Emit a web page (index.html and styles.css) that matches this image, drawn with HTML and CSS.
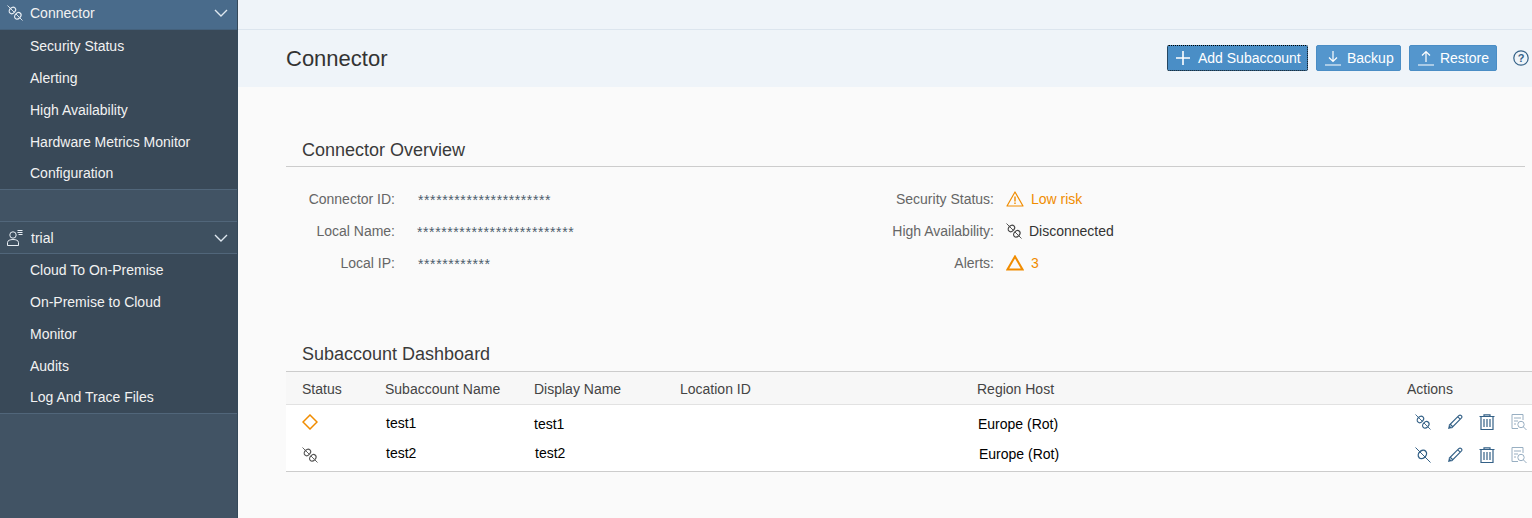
FILE: index.html
```html
<!DOCTYPE html>
<html lang="en">
<head>
    <meta charset="UTF-8">
    <title>Connector</title>
    <link rel="stylesheet" href="styles.css">
</head>
<body>
    <svg class="sprites" width="0" height="0">
        <symbol id="plug" viewBox="0 0 16 16">
            <path d="M.5 .5L3 3M4 4L7 7M9 9L12 12M13 13L15.5 15.5" fill="none" stroke="currentColor" stroke-width=".9"/>
            <ellipse cx="5.4" cy="5.4" rx="3.6" ry="2.7" transform="rotate(-45 5.4 5.4)" fill="none" stroke="currentColor" stroke-width="1.2"/>
            <ellipse cx="10.8" cy="10.8" rx="3.6" ry="2.7" transform="rotate(-45 10.8 10.8)" fill="none" stroke="currentColor" stroke-width="1.2"/>
        </symbol>
        <symbol id="plug-on" viewBox="0 0 16 16">
            <path d="M.5 .5L15.5 15.5" fill="none" stroke="currentColor"/>
            <ellipse cx="7.4" cy="7.4" rx="4.6" ry="3.6" transform="rotate(-45 7.4 7.4)" fill="none" stroke="currentColor" stroke-width="1.4"/>
        </symbol>
        <symbol id="pencil" viewBox="0 0 16 16">
            <path d="M2 11.5L11.8 1.7A1.4 1.4 0 0 1 14.3 4.2L4.5 14 M3.5 10.5L5.5 12.5 M10.8 2.8L13.2 5.2" fill="none" stroke="currentColor" stroke-width="1.1"/>
            <path d="M1 15L2 11L5 14Z" fill="currentColor"/>
        </symbol>
        <symbol id="trash" viewBox="0 0 16 16">
            <path d="M.5 2.5H15.5M5 2.5V.8H11V2.5" fill="none" stroke="currentColor" stroke-width="1.2"/>
            <path d="M2 3V15.5H14V3" fill="none" stroke="currentColor" stroke-width="1.2"/>
            <path d="M5 5V13M8 5V13M11 5V13" fill="none" stroke="currentColor" stroke-width="1.6" opacity=".75"/>
        </symbol>
        <symbol id="log" viewBox="0 0 16 16">
            <path d="M12 6V.5H1V14.5H7M3 4H10M3 7H7M3 10H5" fill="none" stroke="currentColor"/>
            <circle cx="10" cy="10.5" r="3.2" fill="none" stroke="currentColor"/>
            <path d="M12.3 12.8L15.5 16" fill="none" stroke="currentColor"/>
        </symbol>
    </svg>

    <div class="page">
        <nav class="sidebar">
            <div class="nav-head active">
                <svg class="nav-icon"><use href="#plug"/></svg>
                <span class="nav-title">Connector</span>
                <svg class="chevron" viewBox="0 0 14 8"><path d="M1 1L7 7L13 1" fill="none" stroke="currentColor" stroke-width="1.4"/></svg>
            </div>
            <ul class="nav-list">
                <li>Security Status</li>
                <li>Alerting</li>
                <li>High Availability</li>
                <li>Hardware Metrics Monitor</li>
                <li>Configuration</li>
            </ul>
            <div class="nav-gap"></div>
            <div class="nav-head">
                <svg class="nav-icon" viewBox="0 0 16 16"><circle cx="6" cy="5" r="3.2" fill="none" stroke="currentColor"/><path d="M.5 15.5V12.5C.5 10.5 3 9.5 6 9.5S11.5 10.5 11.5 12.5V15.5Z" fill="none" stroke="currentColor"/><path d="M10.5 .5H15.5M10.5 2.5H15.5M11.5 4.5H15.5" fill="none" stroke="currentColor"/></svg>
                <span class="nav-title trial">trial</span>
                <svg class="chevron" viewBox="0 0 14 8"><path d="M1 1L7 7L13 1" fill="none" stroke="currentColor" stroke-width="1.4"/></svg>
            </div>
            <ul class="nav-list">
                <li>Cloud To On-Premise</li>
                <li>On-Premise to Cloud</li>
                <li>Monitor</li>
                <li>Audits</li>
                <li>Log And Trace Files</li>
            </ul>
        </nav>

        <main class="content">
            <div class="topstrip"></div>
            <header class="page-head">
                <h1>Connector</h1>
                <div class="toolbar">
                    <button class="btn focused" type="button">
                        <svg class="btn-icon" viewBox="0 0 16 16"><path d="M8 1V15M1 8H15" fill="none" stroke="currentColor" stroke-width="1.6"/></svg>
                        Add Subaccount
                    </button>
                    <button class="btn backup" type="button">
                        <svg class="btn-icon" viewBox="0 0 16 16"><path d="M8 1V11M4 7.5L8 11.5L12 7.5M0 15H16" fill="none" stroke="currentColor" stroke-width="1.2"/></svg>
                        Backup
                    </button>
                    <button class="btn" type="button">
                        <svg class="btn-icon" viewBox="0 0 16 16"><path d="M8 12V2M4 5.5L8 1.5L12 5.5M0 15H16" fill="none" stroke="currentColor" stroke-width="1.2"/></svg>
                        Restore
                    </button>
                    <svg class="help" viewBox="0 0 16 16"><circle cx="8" cy="8" r="7.2" fill="none" stroke="currentColor" stroke-width="1.2"/><text x="8" y="12" text-anchor="middle">?</text></svg>
                </div>
            </header>

            <section class="overview">
                <h2>Connector Overview</h2>
                <div class="facts">
                    <dl class="fact-col left">
                        <dt>Connector ID:</dt><dd class="mask">**********************</dd>
                        <dt>Local Name:</dt><dd class="mask wide">**************************</dd>
                        <dt>Local IP:</dt><dd class="mask">************</dd>
                    </dl>
                    <dl class="fact-col right">
                        <dt>Security Status:</dt>
                        <dd class="warn"><svg class="fact-icon" viewBox="0 0 18 16"><path d="M9 1L17 15H1Z" fill="none" stroke="currentColor" stroke-width="1.2" stroke-linejoin="round"/><path d="M9 5.5V10.5M9 11.5V13" fill="none" stroke="currentColor" stroke-width="1.4"/></svg>Low risk</dd>
                        <dt>High Availability:</dt>
                        <dd><svg class="fact-icon plug-small"><use href="#plug"/></svg>Disconnected</dd>
                        <dt>Alerts:</dt>
                        <dd class="warn"><svg class="fact-icon" viewBox="0 0 18 16"><path d="M9 1.5L16.5 14.5H1.5Z" fill="none" stroke="currentColor" stroke-width="2"/></svg>3</dd>
                    </dl>
                </div>
            </section>

            <section class="dashboard">
                <h2>Subaccount Dashboard</h2>
                <table class="accounts">
                    <thead>
                        <tr>
                            <th class="c-status">Status</th>
                            <th class="c-name">Subaccount Name</th>
                            <th class="c-display">Display Name</th>
                            <th class="c-location">Location ID</th>
                            <th class="c-region">Region Host</th>
                            <th>Actions</th>
                        </tr>
                    </thead>
                    <tbody>
                        <tr class="row-one">
                            <td><svg class="status-icon diamond" viewBox="0 0 16 16"><path d="M8 1L15 8L8 15L1 8Z" fill="none" stroke="currentColor" stroke-width="1.5"/></svg></td>
                            <td class="shift text">test1</td>
                            <td class="text low">test1</td>
                            <td></td>
                            <td class="shift text low">Europe (Rot)</td>
                            <td class="actions">
                                <svg class="act"><use href="#plug"/></svg>
                                <svg class="act"><use href="#pencil"/></svg>
                                <svg class="act"><use href="#trash"/></svg>
                                <svg class="act faded"><use href="#log"/></svg>
                            </td>
                        </tr>
                        <tr class="row-two">
                            <td><svg class="status-icon grey"><use href="#plug"/></svg></td>
                            <td class="shift text">test2</td>
                            <td class="shift text">test2</td>
                            <td></td>
                            <td class="shift2 text low">Europe (Rot)</td>
                            <td class="actions">
                                <svg class="act"><use href="#plug-on"/></svg>
                                <svg class="act"><use href="#pencil"/></svg>
                                <svg class="act"><use href="#trash"/></svg>
                                <svg class="act faded"><use href="#log"/></svg>
                            </td>
                        </tr>
                    </tbody>
                </table>
            </section>
        </main>
    </div>
</body>
</html>
```

FILE: styles.css
```css
* {
    box-sizing: border-box;
}
html, body {
    margin: 0;
    height: 100%;
    overflow: hidden;
}
body {
    font-family: "Liberation Sans", Arial, sans-serif;
    font-size: 14px;
    color: #333;
    background: #fafafa;
}
.sprites {
    position: absolute;
}
.page {
    display: flex;
    height: 518px;
}

/* side navigation */
.sidebar {
    width: 238px;
    flex: none;
    background: #415364;
    border-right: 1px solid #35495a;
    color: #fff;
}
.nav-head {
    display: flex;
    align-items: center;
    height: 32px;
    padding: 0 8px 0 7px;
    background: #3e5060;
    border-bottom: 1px solid #51667a;
    color: #e8eef4;
}
.nav-head.active {
    height: 30px;
    padding-bottom: 3px;
    background: #496b8b;
    border-bottom-color: #44617c;
}
.nav-icon {
    width: 16px;
    height: 16px;
    flex: none;
}
.nav-title {
    flex: 1;
    margin-left: 7px;
    color: #f2f2f2;
}
.nav-title.trial {
    margin-left: 8px;
}
.chevron {
    width: 14px;
    height: 8px;
    color: #dfe8f0;
    margin-right: 1px;
}
.nav-list {
    list-style: none;
    margin: 0;
    padding: 0;
    background: #394958;
    border-bottom: 1px solid #51667a;
}
.nav-list li {
    height: 32px;
    line-height: 32px;
    padding-left: 30px;
    color: #f2f2f2;
}
.nav-list li:last-child {
    height: 31px;
    line-height: 30px;
}
.nav-gap {
    height: 32px;
    border-bottom: 1px solid #51667a;
}

/* main area */
.content {
    flex: 1;
    min-width: 0;
}
.topstrip {
    height: 30px;
    background: #eff4f9;
    border-bottom: 1px solid #dce5ee;
}
.page-head {
    display: flex;
    justify-content: space-between;
    align-items: center;
    height: 57px;
    padding: 0 3px 1px 48px;
    background: #eff4f9;
}
h1 {
    margin: 2px 0 0;
    font-size: 22px;
    font-weight: 400;
    color: #333;
}
.toolbar {
    display: flex;
    align-items: center;
    gap: 8px;
}
.btn {
    display: flex;
    align-items: center;
    gap: 6px;
    height: 26px;
    padding: 0 7px 0 8px;
    font: 14px "Liberation Sans", Arial, sans-serif;
    color: #fff;
    background: #5496cd;
    border: 1px solid #4a8dc5;
    border-radius: 2px;
    white-space: nowrap;
}
.btn.focused {
    width: 141px;
    gap: 7px;
    padding-left: 7px;
    background: #4a8ec6;
    border: 1px dotted #000;
}
.btn.backup {
    width: 85px;
}
.btn-icon {
    width: 16px;
    height: 16px;
    flex: none;
}
.help {
    width: 16px;
    height: 16px;
    margin-left: 8px;
    color: #346187;
}
.help text {
    font-size: 11px;
    font-weight: 700;
    fill: #346187;
    stroke: none;
}

h2 {
    margin: 0;
    padding-left: 16px;
    font-size: 18px;
    font-weight: 400;
    line-height: 24px;
    color: #3a3a3a;
}
.overview {
    margin: 51px 7px 0 48px;
}
.overview h2 {
    padding-bottom: 4px;
    border-bottom: 1px solid #ccc;
}
.facts {
    display: flex;
    padding-top: 16px;
}
.fact-col {
    display: grid;
    grid-auto-rows: 32px;
    align-items: center;
    margin: 0;
}
.fact-col dt {
    text-align: right;
    color: #666;
}
.fact-col dd {
    display: flex;
    align-items: center;
    margin: 0;
}
.fact-col.left {
    grid-template-columns: 109px 1fr;
    column-gap: 23px;
    width: 590px;
}
.fact-col.right {
    grid-template-columns: 118px 1fr;
    column-gap: 12px;
}
.fact-col .mask {
    padding-top: 2px;
    font-size: 14px;
    letter-spacing: .6px;
    color: #4d5d6c;
}
.fact-col .mask.wide {
    margin-left: -1px;
}
.warn {
    color: #f08c00;
}
.fact-icon {
    width: 18px;
    height: 16px;
    margin-right: 7px;
}
.plug-small {
    width: 16px;
    margin-right: 7px;
    color: #444;
}

.dashboard {
    margin: 63px 0 0 48px;
}
.dashboard h2 {
    padding-bottom: 5px;
}
.accounts {
    width: 100%;
    border-collapse: collapse;
    table-layout: fixed;
    background: #fff;
    border-bottom: 1px solid #ccc;
}
.accounts th {
    height: 33px;
    font-weight: 400;
    text-align: left;
    padding: 1px 0 0 16px;
    color: #444;
    background: #f7f7f7;
    border-top: 1px solid #ccc;
    border-bottom: 1px solid #e2e2e2;
}
.accounts td {
    height: 33px;
    padding: 0;
    color: #000;
}
.accounts td:first-child {
    padding-left: 16px;
}
.accounts .row-one .text {
    padding-top: 2px;
}
.accounts .row-one .low {
    padding-top: 4px;
}
.accounts .row-two .text {
    padding-bottom: 3px;
}
.accounts .row-two .low {
    padding-bottom: 1px;
}
.c-status {
    width: 99px;
}
.c-name {
    width: 149px;
    padding-left: 0 !important;
}
.c-display {
    width: 146px;
    padding-left: 0 !important;
}
.c-location {
    width: 297px;
    padding-left: 0 !important;
}
.c-region {
    width: 414px;
    padding-left: 0 !important;
}
.shift {
    padding-left: 1px !important;
}
.shift2 {
    padding-left: 2px !important;
}
.status-icon {
    display: block;
    width: 16px;
    height: 16px;
}
.diamond {
    color: #f08c00;
}
.grey {
    color: #555;
}
.actions {
    display: flex;
    align-items: center;
    gap: 16px;
    height: 33px;
    padding-left: 24px !important;
}
.act {
    width: 16px;
    height: 16px;
    flex: none;
    color: #346187;
}
.act.faded {
    opacity: .5;
}
```
